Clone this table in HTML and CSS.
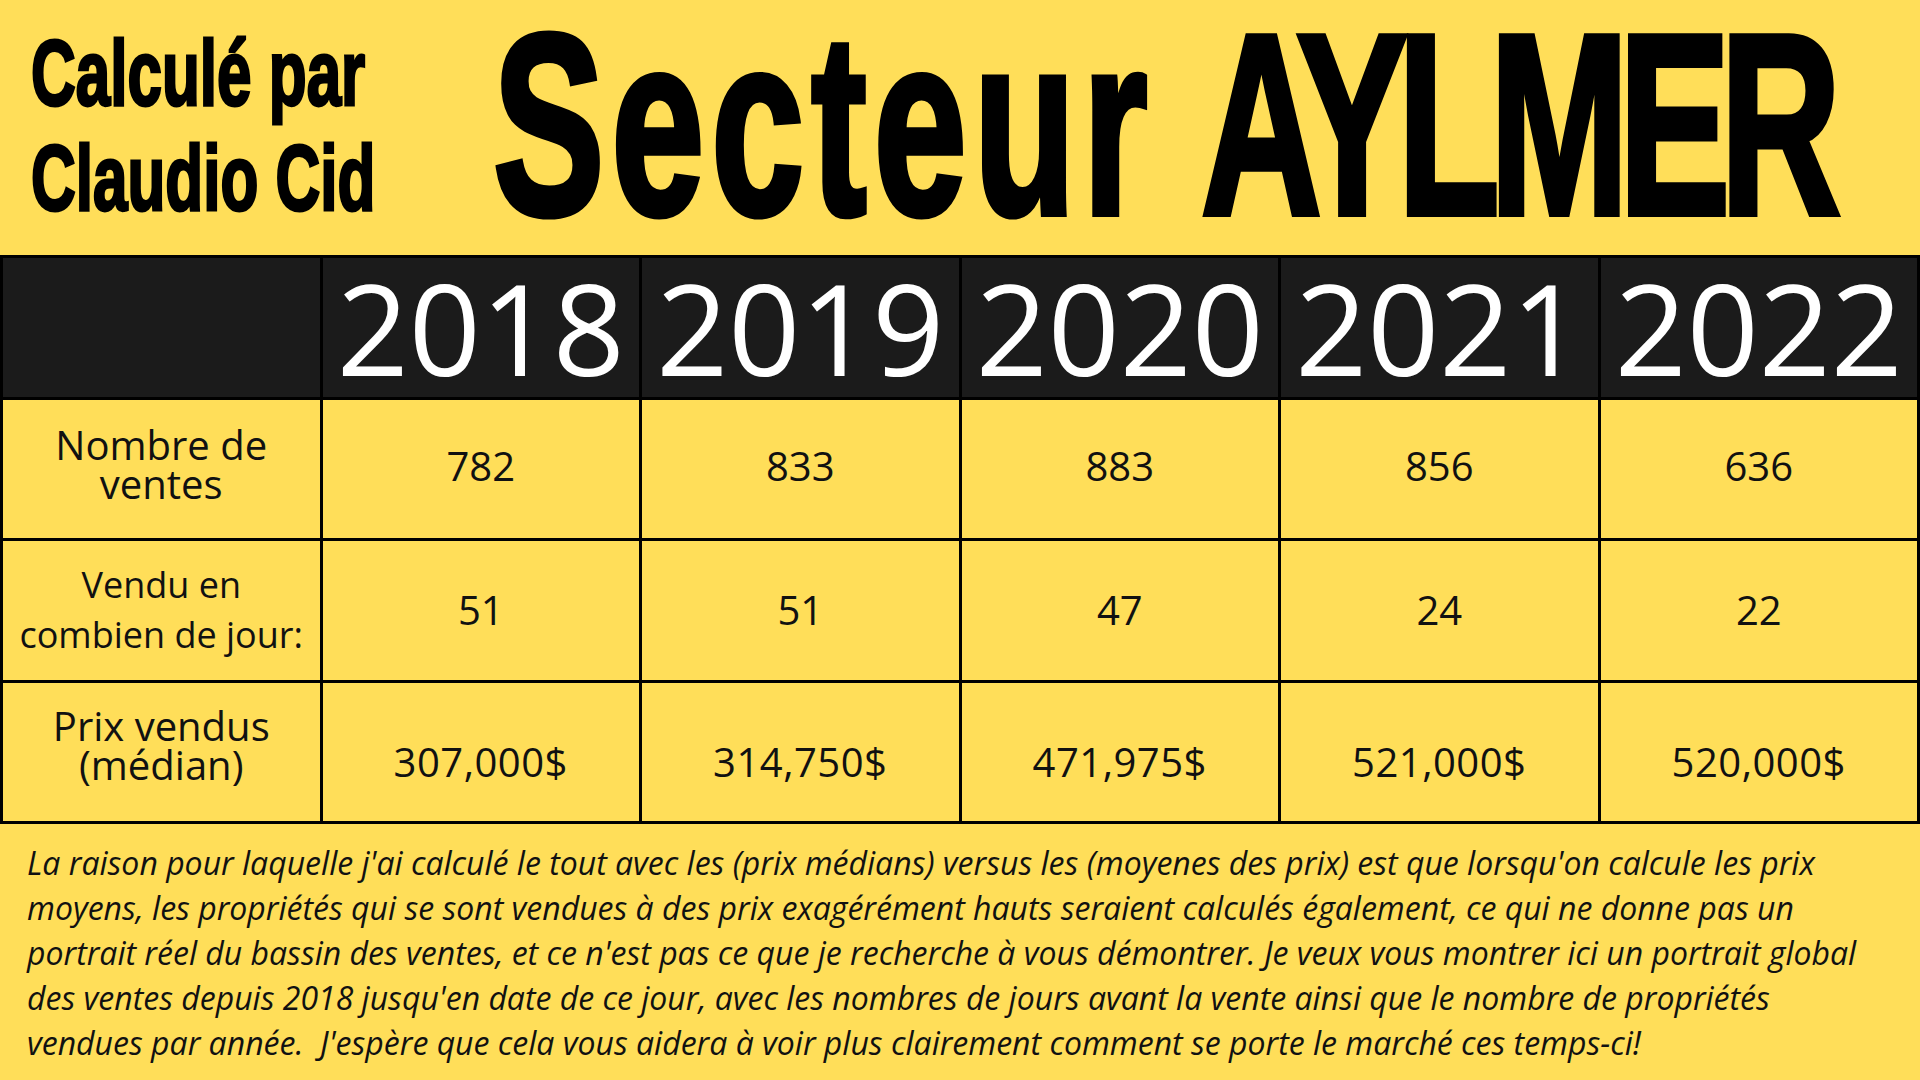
FILE: index.html
```html
<!DOCTYPE html>
<html lang="fr">
<head>
<meta charset="utf-8">
<title>Secteur AYLMER</title>
<link rel="stylesheet" href="styles.css">
</head>
<body>
<div class="page">
  <header class="top">
    <div class="credit">
      <span class="credit-line">Calculé par</span>
      <span class="credit-line">Claudio Cid</span>
    </div>
    <h1 class="title"><span class="title-text"><span class="word-loose">Secteur</span> <span class="word-tight">AYLMER</span></span></h1>
  </header>

  <div class="grid">
    <div class="cell head"></div>
    <div class="cell head year">2018</div>
    <div class="cell head year">2019</div>
    <div class="cell head year">2020</div>
    <div class="cell head year">2021</div>
    <div class="cell head year">2022</div>

    <div class="cell label">Nombre de<br>ventes</div>
    <div class="cell value">782</div>
    <div class="cell value">833</div>
    <div class="cell value">883</div>
    <div class="cell value">856</div>
    <div class="cell value">636</div>

    <div class="cell label label-days">Vendu en<br>combien de jour:</div>
    <div class="cell value value-mid">51</div>
    <div class="cell value value-mid">51</div>
    <div class="cell value value-mid">47</div>
    <div class="cell value value-mid">24</div>
    <div class="cell value value-mid">22</div>

    <div class="cell label label-price">Prix vendus<br>(médian)</div>
    <div class="cell value value-low">307,000$</div>
    <div class="cell value value-low">314,750$</div>
    <div class="cell value value-low">471,975$</div>
    <div class="cell value value-low">521,000$</div>
    <div class="cell value value-low">520,000$</div>
  </div>

  <p class="note">La raison pour laquelle j'ai calculé le tout avec les (prix médians) versus les (moyenes des prix) est que lorsqu'on calcule les prix<br>moyens, les propriétés qui se sont vendues à des prix exagérément hauts seraient calculés également, ce qui ne donne pas un<br>portrait réel du bassin des ventes, et ce n'est pas ce que je recherche à vous démontrer. Je veux vous montrer ici un portrait global<br>des ventes depuis 2018 jusqu'en date de ce jour, avec les nombres de jours avant la vente ainsi que le nombre de propriétés<br>vendues par année.&nbsp; J'espère que cela vous aidera à voir plus clairement comment se porte le marché ces temps-ci!</p>
</div>
</body>
</html>
```

FILE: styles.css
```css
html, body {
  margin: 0;
  padding: 0;
  overflow: hidden;
}

body {
  background: #ffde59;
  color: #111111;
  font-family: "Open Sans", "Noto Sans", "DejaVu Sans", sans-serif;
}

.page {
  width: 1920px;
  height: 1080px;
  display: flex;
  flex-direction: column;
  overflow: hidden;
}

.top {
  height: 255px;
  display: flex;
  align-items: flex-start;
  flex-shrink: 0;
}

.credit {
  width: 462px;
  padding: 31px 0 0 31px;
  display: flex;
  flex-direction: column;
  flex-shrink: 0;
  font-family: "Liberation Sans", Arial, sans-serif;
  font-weight: 700;
  font-size: 62px;
  line-height: 105px;
  color: #000;
}

.credit-line {
  display: block;
  height: 105px;
  white-space: nowrap;
  transform: scaleY(1.51);
  transform-origin: 0 74px;
  -webkit-text-stroke: 2px #000;
}

.title {
  margin: 0;
  padding-top: 91px;
  font-family: "Liberation Sans", Arial, sans-serif;
  font-weight: 700;
  font-size: 167px;
  line-height: 130px;
  color: #000;
  white-space: nowrap;
}

.title-text {
  display: block;
  height: 130px;
  transform: scaleY(1.547);
  transform-origin: 0 123px;
  -webkit-text-stroke: 4px #000;
}

.word-loose {
  letter-spacing: 7px;
}

.word-tight {
  letter-spacing: -10px;
}

.grid {
  box-sizing: border-box;
  width: 1920px;
  height: 569px;
  flex-shrink: 0;
  background: #000;
  padding: 3px;
  display: grid;
  grid-template-columns: repeat(6, 1fr);
  grid-template-rows: repeat(4, 1fr);
  gap: 3px;
}

.cell {
  background: #ffde59;
  display: flex;
  align-items: center;
  justify-content: center;
  text-align: center;
  min-width: 0;
}

.head {
  background: #1b1b1b;
}

.year {
  color: #ffffff;
  font-size: 126px;
  line-height: 1;
  padding-top: 0;
}

.label {
  font-size: 40px;
  line-height: 39px;
  color: #111;
  padding-bottom: 10px;
}

.label-days {
  font-size: 36px;
  line-height: 50px;
  padding-bottom: 0;
}

.label-price {
  padding-bottom: 14px;
}

.value {
  font-size: 40px;
  line-height: 1;
  color: #111;
  padding-bottom: 6px;
}

.value-mid {
  padding-bottom: 0;
}

.value-low {
  padding-top: 20px;
  padding-bottom: 0;
  letter-spacing: 0.5px;
}

.note {
  margin: 16px 0 0 0;
  padding-left: 27px;
  font-style: italic;
  font-size: 32px;
  line-height: 45px;
  color: #111;
  white-space: nowrap;
}
```
